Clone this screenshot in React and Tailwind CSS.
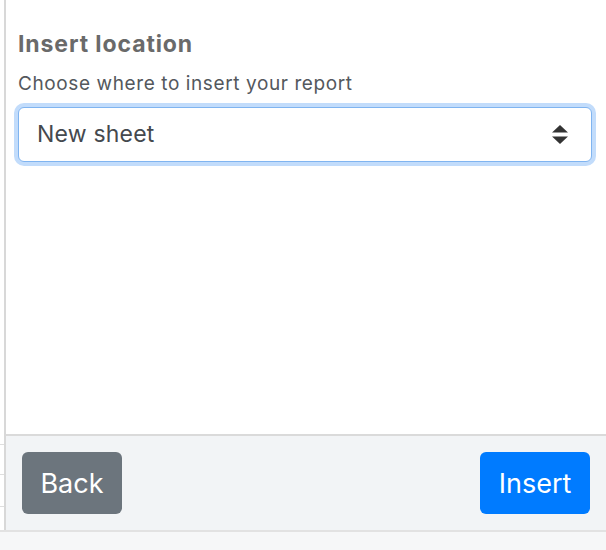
export default function App() {
  return (
    <div className="w-[606px] h-[550px] flex flex-col bg-white font-['Inter',sans-serif] overflow-hidden">
      <div className="h-[530px] flex">
        {/* spreadsheet edge */}
        <div className="w-[4px] flex flex-col">
          <div className="h-[444px]" />
          <div className="h-[30px] border-t border-[#dedede]" />
          <div className="h-[32px] border-t border-[#dedede]" />
          <div className="flex-1 border-t border-[#dedede]" />
        </div>

        {/* task pane */}
        <div className="flex-1 flex flex-col border-l-2 border-[#d8d8d8]">
          <div className="flex-1 pl-3 pr-[14px] pt-[33px]">
            <h2 className="text-[23px] leading-none font-bold tracking-[0.9px] text-[#6a6a6a]">Insert location</h2>
            <p className="mt-[18px] text-[19px] leading-none tracking-[0.6px] text-[#54585d]">Choose where to insert your report</p>
            <div className="mt-[14px] h-[55px] flex items-center justify-between pl-[18px] pr-[23px] border border-[#80b4f0] rounded-[6px] shadow-[0_0_0_4px_#c2dcfb] bg-white">
              <span className="text-[23px] leading-none tracking-[0.2px] text-[#45494e]">New sheet</span>
              <svg width="16" height="20" viewBox="0 0 16 20" className="text-[#333]">
                <path d="M8 0 L16 7.5 L0 7.5 Z" fill="currentColor" />
                <path d="M0 11.5 L16 11.5 L8 19 Z" fill="currentColor" />
              </svg>
            </div>
          </div>

          <div className="h-[96px] border-t-2 border-[#dadada] bg-[#f2f4f6] flex items-center justify-between px-4">
            <button className="w-[100px] h-[62px] rounded-[6px] bg-[#6c757d] text-white text-[27px] leading-none">
              Back
            </button>
            <button className="w-[110px] h-[62px] rounded-[6px] bg-[#007bff] text-white text-[27px] leading-none">
              Insert
            </button>
          </div>
        </div>
      </div>
      <div className="flex-1 border-t-2 border-[#e2e2e2] bg-[#f6f7f8]" />
    </div>
  );
}
